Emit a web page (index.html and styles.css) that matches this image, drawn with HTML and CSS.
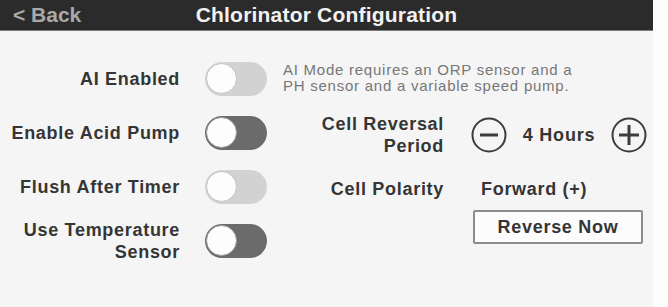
FILE: index.html
```html
<!DOCTYPE html>
<html lang="en">
<head>
<meta charset="UTF-8">
<meta name="viewport" content="width=device-width, initial-scale=1.0">
<title>Chlorinator Configuration</title>
<link rel="stylesheet" href="styles.css">
</head>
<body>

<div class="screen">
  <div class="header">
    <div class="back">&lt; Back</div>
    <div class="title">Chlorinator Configuration</div>
    <div></div>
  </div>

  <div class="content">
    <div class="left">
      <div class="setting">
        <div class="label">AI Enabled</div>
        <div class="toggle off"><span class="knob"></span></div>
      </div>
      <div class="setting">
        <div class="label">Enable Acid Pump</div>
        <div class="toggle on"><span class="knob"></span></div>
      </div>
      <div class="setting">
        <div class="label">Flush After Timer</div>
        <div class="toggle off"><span class="knob"></span></div>
      </div>
      <div class="setting">
        <div class="label">Use Temperature<br>Sensor</div>
        <div class="toggle on"><span class="knob"></span></div>
      </div>
    </div>

    <div class="right">
      <div class="note">AI Mode requires an ORP sensor and a<br>PH sensor and a variable speed pump.</div>

      <div class="rrow reversal">
        <div class="rlabel">Cell Reversal<br>Period</div>
        <div class="stepper">
          <svg class="step-btn" width="36" height="36" viewBox="0 0 36 36">
            <circle cx="18" cy="18" r="16.5" fill="none" stroke="#3c3c3c" stroke-width="2"/>
            <line x1="9" y1="18" x2="27" y2="18" stroke="#3c3c3c" stroke-width="3"/>
          </svg>
          <span class="hours">4 Hours</span>
          <svg class="step-btn" width="36" height="36" viewBox="0 0 36 36">
            <circle cx="18" cy="18" r="16.5" fill="none" stroke="#3c3c3c" stroke-width="2"/>
            <line x1="8" y1="18" x2="28" y2="18" stroke="#3c3c3c" stroke-width="3"/>
            <line x1="18" y1="8" x2="18" y2="28" stroke="#3c3c3c" stroke-width="3"/>
          </svg>
        </div>
      </div>

      <div class="rrow polarity">
        <div class="rlabel">Cell Polarity</div>
        <div class="value">Forward (+)</div>
      </div>

      <div class="rrow">
        <div class="rlabel"></div>
        <button class="reverse-btn">Reverse Now</button>
      </div>
    </div>
  </div>
</div>

</body>
</html>
```

FILE: styles.css
```css
body {
  margin: 0;
  background-color: #fdfdfd;
  font-family: "Liberation Sans", Arial, sans-serif;
}
.screen {
  width: 653px;
  height: 307px;
  background-color: #f5f5f5;
}
.header {
  display: grid;
  grid-template-columns: 1fr auto 1fr;
  align-items: center;
  height: 30px;
  background-color: #2b2b2b;
  border-bottom: 1px solid #7a7a7a;
  font-size: 21px;
  font-weight: bold;
}
.back {
  padding-left: 13px;
  color: #a9a9a9;
}
.title {
  color: #f2f2f2;
  letter-spacing: 0.2px;
}
.content {
  display: flex;
  padding-top: 31px;
}
.left {
  display: flex;
  flex-direction: column;
  gap: 20px;
}
.setting {
  display: flex;
  align-items: center;
  height: 34px;
}
.label {
  width: 180px;
  text-align: right;
  font-size: 18px;
  font-weight: bold;
  letter-spacing: 0.7px;
  line-height: 22px;
  color: #353535;
}
.toggle {
  position: relative;
  width: 62px;
  height: 34px;
  margin-left: 25px;
  border-radius: 17px;
}
.toggle.off {
  background-color: #d2d2d2;
}
.toggle.on {
  background-color: #6b6b6b;
}
.knob {
  position: absolute;
  left: 1px;
  top: 1px;
  width: 29px;
  height: 29px;
  border-radius: 50%;
  background-color: #fdfdfd;
  border: 1.5px solid #c4c4c4;
}
.toggle.on .knob {
  border-color: #9a9a9a;
}
.right {
  display: flex;
  flex-direction: column;
  margin-left: 16px;
}
.note {
  font-size: 15px;
  letter-spacing: 0.75px;
  line-height: 16px;
  color: #777777;
  white-space: nowrap;
}
.rrow {
  display: flex;
  align-items: center;
}
.rrow.reversal {
  height: 44px;
  margin-top: 19px;
}
.rrow.polarity {
  height: 22px;
  margin-top: 21px;
}
.rrow:last-child {
  margin-top: 10px;
}
.rlabel {
  width: 161px;
  text-align: right;
  font-size: 18px;
  font-weight: bold;
  letter-spacing: 0.7px;
  line-height: 22px;
  color: #353535;
}
.stepper {
  display: flex;
  align-items: center;
  margin-left: 27px;
}
.hours {
  width: 76px;
  margin: 0 14px;
  text-align: center;
  font-size: 18px;
  font-weight: bold;
  letter-spacing: 0.8px;
  color: #353535;
}
.value {
  margin-left: 37px;
  font-size: 18px;
  font-weight: bold;
  letter-spacing: 0.7px;
  color: #353535;
}
.reverse-btn {
  width: 170px;
  height: 34px;
  margin-left: 29px;
  background-color: #fcfcfc;
  border: 2px solid #8c8c8c;
  border-radius: 2px;
  font-family: "Liberation Sans", Arial, sans-serif;
  font-size: 18px;
  font-weight: bold;
  letter-spacing: 0.7px;
  color: #353535;
}
```
